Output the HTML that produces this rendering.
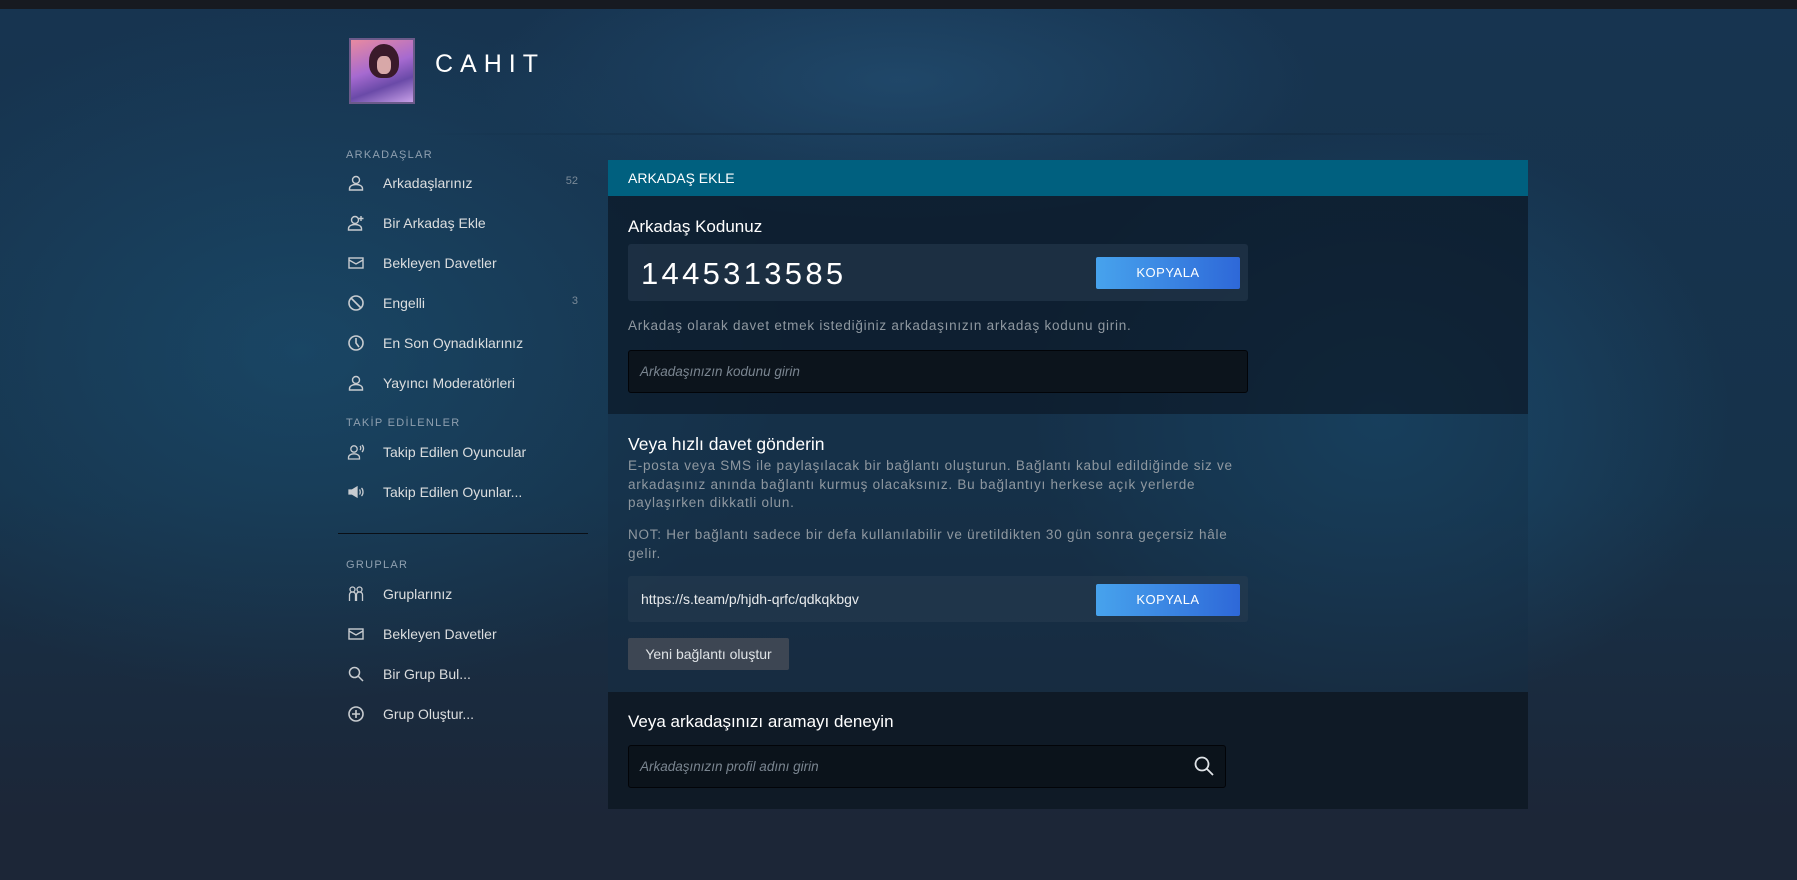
<!DOCTYPE html>
<html><head><meta charset="utf-8"><style>
*{margin:0;padding:0;box-sizing:border-box}
body{width:1797px;height:880px;overflow:hidden;position:relative;font-family:"Liberation Sans","DejaVu Sans",sans-serif;color:#dcdedf;
background:#1c2637;}
.bg{position:absolute;left:0;top:0;width:1797px;height:820px;
background:radial-gradient(ellipse 500px 420px at 1380px 420px,rgba(30,90,130,.55),transparent 70%),
radial-gradient(ellipse 700px 500px at 300px 350px,rgba(28,85,120,.55),transparent 70%),
radial-gradient(ellipse 600px 200px at 900px 80px,rgba(40,90,130,.5),transparent 70%),
linear-gradient(#173450,#16324a 60%,#1c2637);}
.topbar{position:absolute;left:0;top:0;width:1797px;height:9px;background:#171a21}
.hdrline{position:absolute;left:420px;top:133px;width:1100px;height:2px;background:linear-gradient(90deg,transparent,rgba(10,25,40,.5),transparent)}
.av{position:absolute;left:349px;top:38px;width:66px;height:66px;border:2px solid #6b5a8a;
background:linear-gradient(160deg,#e88aa0 0%,#a66ad0 45%,#6a4aa8 70%,#c8a0e8 100%);}
.av:before{content:"";position:absolute;left:18px;top:4px;width:30px;height:34px;border-radius:50% 50% 40% 40%;background:#3a1a2a}
.av:after{content:"";position:absolute;left:26px;top:16px;width:14px;height:18px;border-radius:40%;background:#d8a8a8}
.name{position:absolute;left:435px;top:50px;font-size:25px;letter-spacing:7px;color:#fff}
.lbl{position:absolute;left:346px;font-size:11px;letter-spacing:1.3px;color:#8fa0b0}
.it{position:absolute;left:383px;font-size:14px;color:#dcdedf;transform:translateY(-50%)}
.ic{position:absolute;left:347px;width:18px;height:18px;transform:translateY(-50%)}
.cnt{position:absolute;left:560px;width:18px;text-align:right;font-size:11px;color:#7a8a98;transform:translateY(-50%)}
.sep{position:absolute;left:338px;top:533px;width:250px;height:1px;background:#0a0f16}
.panel{position:absolute;left:608px;width:920px}
.ph{top:160px;height:36px;background:#00607f;font-size:14px;padding:10px 20px;color:#fff}
.s1{top:196px;height:218px;background:rgba(12,25,40,.75)}
.s2{top:414px;height:278px;background:rgba(20,45,70,.35)}
.s3{top:692px;height:117px;background:#0f1a26}
.t{position:absolute;left:628px;color:#fff}
.box{position:absolute;left:628px;width:620px;background:rgba(40,60,80,.55);border-radius:3px}
.btn{position:absolute;left:1096px;width:144px;height:32px;background:linear-gradient(90deg,#47a3ed,#2e68d8);border-radius:2px;color:#fff;font-size:13px;text-align:center;line-height:32px;letter-spacing:.5px}
.inp{position:absolute;left:628px;height:43px;background:#0c141c;border:1px solid #020408;border-radius:3px;font-style:italic;font-size:13.5px;color:#7a8590;padding-left:11px;line-height:41px}
.p{position:absolute;left:628px;font-size:13.5px;color:#8f98a0;line-height:18.5px;width:700px;letter-spacing:.75px;white-space:nowrap}
</style></head><body>
<div class="bg"></div>
<div class="topbar"></div>
<div class="hdrline"></div>
<div class="av"></div>
<div class="name">CAHIT</div>

<div class="lbl" style="top:149px">ARKADAŞLAR</div>
<svg class="ic" style="top:183px" viewBox="0 0 18 18" fill="none" stroke="#c8ccd0" stroke-width="1.4"><circle cx="9" cy="6" r="3.5"/><path d="M2.5 16v-1.5c0-2.5 3-4 6.5-4s6.5 1.5 6.5 4V16z"/></svg>
<div class="it" style="top:183px">Arkadaşlarınız</div><div class="cnt" style="top:181px">52</div>
<svg class="ic" style="top:223px" viewBox="0 0 18 18" fill="none" stroke="#c8ccd0" stroke-width="1.4"><circle cx="8" cy="6" r="3.5"/><path d="M1.5 16v-1.5c0-2.5 3-4 6.5-4s6.5 1.5 6.5 4V16zM14 2v5M11.5 4.5h5"/></svg>
<div class="it" style="top:223px">Bir Arkadaş Ekle</div>
<svg class="ic" style="top:263px" viewBox="0 0 18 18" fill="none" stroke="#c8ccd0" stroke-width="1.4"><rect x="2" y="4" width="14" height="10"/><path d="M2 6l7 4 7-4"/></svg>
<div class="it" style="top:263px">Bekleyen Davetler</div>
<svg class="ic" style="top:303px" viewBox="0 0 18 18" fill="none" stroke="#c8ccd0" stroke-width="1.6"><circle cx="9" cy="9" r="7"/><path d="M4 4l10 10"/></svg>
<div class="it" style="top:303px">Engelli</div><div class="cnt" style="top:301px">3</div>
<svg class="ic" style="top:343px" viewBox="0 0 18 18" fill="none" stroke="#c8ccd0" stroke-width="1.6"><circle cx="9" cy="9" r="7"/><path d="M9 4v5l3 4"/></svg>
<div class="it" style="top:343px">En Son Oynadıklarınız</div>
<svg class="ic" style="top:383px" viewBox="0 0 18 18" fill="none" stroke="#c8ccd0" stroke-width="1.4"><circle cx="9" cy="6" r="3.5"/><path d="M2.5 16v-1.5c0-2.5 3-4 6.5-4s6.5 1.5 6.5 4V16z"/></svg>
<div class="it" style="top:383px">Yayıncı Moderatörleri</div>

<div class="lbl" style="top:417px">TAKİP EDİLENLER</div>
<svg class="ic" style="top:452px" viewBox="0 0 18 18" fill="none" stroke="#c8ccd0" stroke-width="1.3"><circle cx="7" cy="6" r="3.2"/><path d="M1.5 16v-1.5c0-2.3 2.5-3.7 5.5-3.7s5.5 1.4 5.5 3.7V16zM13 3c1 1 1 3 0 4M15 2c2 2 2 5 0 7"/></svg>
<div class="it" style="top:452px">Takip Edilen Oyuncular</div>
<svg class="ic" style="top:492px" viewBox="0 0 18 18" fill="none" stroke="#c8ccd0" stroke-width="1.3"><path d="M2 7h3l5-3v10l-5-3H2z" fill="#c8ccd0"/><path d="M12.5 6.5c1 1 1 4 0 5M14.5 5c2 2 2 6 0 8"/></svg>
<div class="it" style="top:492px">Takip Edilen Oyunlar...</div>

<div class="sep"></div>
<div class="lbl" style="top:559px">GRUPLAR</div>
<svg class="ic" style="top:594px" viewBox="0 0 18 18" fill="none" stroke="#c8ccd0" stroke-width="1.3"><circle cx="5.5" cy="4.5" r="2.5"/><circle cx="12.5" cy="4.5" r="2.5"/><path d="M2.5 16V9.5c0-1.5 1.5-2.5 3-2.5s3 1 3 2.5V16M9.5 16V9.5c0-1.5 1.5-2.5 3-2.5s3 1 3 2.5V16"/></svg>
<div class="it" style="top:594px">Gruplarınız</div>
<svg class="ic" style="top:634px" viewBox="0 0 18 18" fill="none" stroke="#c8ccd0" stroke-width="1.4"><rect x="2" y="4" width="14" height="10"/><path d="M2 6l7 4 7-4"/></svg>
<div class="it" style="top:634px">Bekleyen Davetler</div>
<svg class="ic" style="top:674px" viewBox="0 0 18 18" fill="none" stroke="#c8ccd0" stroke-width="1.5"><circle cx="7.5" cy="7.5" r="5"/><path d="M11 11l5 5"/></svg>
<div class="it" style="top:674px">Bir Grup Bul...</div>
<svg class="ic" style="top:714px" viewBox="0 0 18 18" fill="none" stroke="#c8ccd0" stroke-width="1.6"><circle cx="9" cy="9" r="7"/><path d="M9 5v8M5 9h8"/></svg>
<div class="it" style="top:714px">Grup Oluştur...</div>

<div class="panel ph" style="position:absolute">ARKADAŞ EKLE</div>
<div class="panel s1"></div>
<div class="panel s2"></div>
<div class="panel s3"></div>

<div class="t" style="top:217px;font-size:17px">Arkadaş Kodunuz</div>
<div class="box" style="top:244px;height:57px"></div>
<div class="t" style="top:256px;left:641px;font-size:31px;letter-spacing:3.3px">1445313585</div>
<div class="btn" style="top:257px">KOPYALA</div>
<div class="p" style="top:317px">Arkadaş olarak davet etmek istediğiniz arkadaşınızın arkadaş kodunu girin.</div>
<div class="inp" style="top:350px;width:620px">Arkadaşınızın kodunu girin</div>

<div class="t" style="top:434px;font-size:17.5px">Veya hızlı davet gönderin</div>
<div class="p" style="top:457px">E-posta veya SMS ile paylaşılacak bir bağlantı oluşturun. Bağlantı kabul edildiğinde siz ve<br>arkadaşınız anında bağlantı kurmuş olacaksınız. Bu bağlantıyı herkese açık yerlerde<br>paylaşırken dikkatli olun.</div>
<div class="p" style="top:526px">NOT: Her bağlantı sadece bir defa kullanılabilir ve üretildikten 30 gün sonra geçersiz hâle<br>gelir.</div>
<div class="box" style="top:576px;height:46px"></div>
<div class="t" style="top:591px;left:641px;font-size:14px;color:#e8eaec">https://s.team/p/hjdh-qrfc/qdkqkbgv</div>
<div class="btn" style="top:584px">KOPYALA</div>
<div style="position:absolute;left:628px;top:638px;width:161px;height:32px;background:#3d4653;border-radius:2px;font-size:14px;line-height:32px;text-align:center;color:#dfe3e6">Yeni bağlantı oluştur</div>

<div class="t" style="top:712px;font-size:17px">Veya arkadaşınızı aramayı deneyin</div>
<div class="inp" style="top:745px;width:598px;background:#0b131b">Arkadaşınızın profil adını girin</div>
<svg style="position:absolute;left:1193px;top:755px" width="22" height="22" viewBox="0 0 22 22" fill="none" stroke="#e0e4e8" stroke-width="1.8"><circle cx="9" cy="9" r="6.5"/><path d="M14 14l6 6"/></svg>
</body></html>
